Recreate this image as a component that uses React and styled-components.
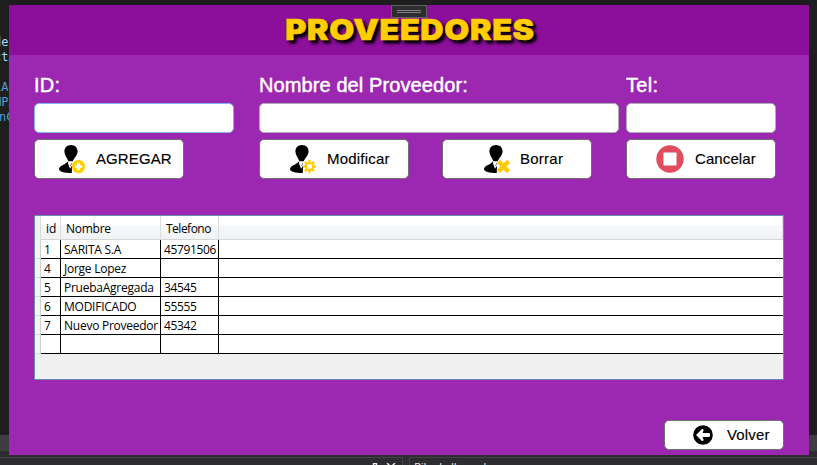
import React from "react";
import styled, { createGlobalStyle } from "styled-components";

const GlobalStyle = createGlobalStyle`
  * { box-sizing: border-box; }
  body { margin: 0; background: #1e1e1e; overflow: hidden; }
`;

const Desktop = styled.div`
  display: grid;
  width: 817px;
  height: 465px;
  overflow: hidden;
  background: #1e1e1e;
`;

const Editor = styled.div`
  grid-area: 1 / 1;
  display: grid;
  grid-template-rows: 435px 16px 14px;
  min-width: 0;
  height: 465px;
  overflow: hidden;
`;

const CodeArea = styled.div`
  display: flex;
  flex-direction: column;
  width: 9px;
  overflow: hidden;
  padding-top: 12px;
  font: 12px/15px "DejaVu Sans Mono", monospace;
`;

const CodeLine = styled.div`
  height: ${(p) => p.$h}px;
  margin-left: ${(p) => p.$shift}px;
  color: ${(p) => p.$color};
  white-space: pre;
`;

const ScrollStrip = styled.div`
  background: #3e3e42;
`;

const DockRow = styled.div`
  display: flex;
  gap: 6px;
  padding-top: 6px;
  background: #2d2d30;
`;

const DockPanel = styled.div`
  width: ${(p) => p.$w}px;
  flex: none;
  height: 20px;
  padding: 2px 0 0 ${(p) => p.$pad}px;
  border: 1px solid #434346;
  border-left-width: ${(p) => (p.$open ? 0 : 1)}px;
  color: #e8e8e8;
  font: 11.5px/14px "Open Sans", sans-serif;
  letter-spacing: -0.2px;
  white-space: pre;

  svg { display: block; margin-top: 3px; }
`;

const AppWindow = styled.main`
  grid-area: 1 / 1;
  z-index: 1;
  width: 800px;
  height: 450px;
  margin: 5px 0 0 9px;
  background: #9c27b0;
  font-family: "Liberation Sans", Arial, sans-serif;
`;

const Header = styled.header`
  position: relative;
  display: flex;
  justify-content: center;
  height: 50px;
  background: #8b0f9b;
`;

const Title = styled.h1`
  margin: 7px 0 0 2px;
  color: #ffcd00;
  font: 900 28.5px/36px Inter, sans-serif;
  letter-spacing: 0.5px;
  transform: scaleX(1.135);
  -webkit-text-stroke: 0.5px #ffcd00;
  text-shadow: 2.6px 3px 3px #000, 2.6px 3px 3px rgba(0, 0, 0, 0.7);
  white-space: nowrap;
`;

const DebugHandle = styled.div`
  position: absolute;
  top: 0;
  left: 382px;
  display: flex;
  flex-direction: column;
  gap: 1px;
  width: 36px;
  height: 13px;
  padding: 4px 5px;
  border: 1px solid #626264;
  background: #2d2d30;
`;

const HandleBar = styled.span`
  height: 1px;
  background: #808082;
`;

const Body = styled.div`
  display: flex;
  flex-direction: column;
  height: 400px;
  padding: 19px 25px 5px;
`;

const Fields = styled.div`
  display: grid;
  grid-template-columns: 225px 367px 150px;
  margin-bottom: 6px;
`;

const Field = styled.label`
  display: flex;
  flex-direction: column;
  width: ${(p) => p.$w}px;
`;

const Caption = styled.span`
  height: 29px;
  color: #fff;
  font-size: 20px;
  line-height: 23px;
  letter-spacing: ${(p) => p.$track}px;
  -webkit-text-stroke: 0.45px #fff;
  white-space: nowrap;
`;

const Input = styled.input`
  width: 100%;
  height: 30px;
  padding: 0 6px;
  border: 1px solid ${(p) => (p.$active ? "#7eb4ea" : "#abadb3")};
  border-radius: 5px;
  outline: none;
  background: #fff;
`;

const Actions = styled.div`
  display: grid;
  grid-template-columns: 225px 183px 184px 150px;
  margin-bottom: 36px;
`;

const Button = styled.button`
  display: flex;
  align-items: center;
  width: ${(p) => p.$w || 150}px;
  height: ${(p) => p.$h || 40}px;
  padding: 0 0 0 ${(p) => p.$pad}px;
  border: 1px solid #707070;
  border-radius: 5px;
  background: #fff;
  color: #000;
  font: 15px/20px "Liberation Sans", Arial, sans-serif;

  svg { flex: none; }
`;

const ButtonText = styled.span`
  margin-left: ${(p) => p.$gap}px;
  letter-spacing: ${(p) => p.$track}px;
  -webkit-text-stroke: 0.15px #000;
`;

const Grid = styled.div`
  width: 750px;
  height: 165px;
  flex: none;
  border: 1px solid #688caf;
  background: #f0f0f0;
  font: 12px/18px "Open Sans", "Noto Sans", sans-serif;
  color: #000;
`;

const GridHead = styled.div`
  display: grid;
  grid-template-columns: 6px 20px 100px 58px 1fr;
  height: 24px;
`;

const HeadCell = styled.div`
  padding: 4px 0 0 5px;
  border-right: 1px solid #dcdcde;
  border-bottom: 1px solid #d5d5d5;
  background: linear-gradient(#fff 0 40%, #f7f8fa 41%, #f1f2f4);
  letter-spacing: ${(p) => p.$track || 0}px;
  white-space: nowrap;

  &:first-child { background: #f0f0f0; border-bottom-color: #f0f0f0; }
`;

const GridRow = styled.div`
  display: grid;
  grid-template-columns: 6px 20px 100px 58px 1fr;
  grid-template-rows: 19px;
  height: 19px;
`;

const RowHead = styled.div`
  border-right: 1px solid #d0d0d0;
  border-bottom: 1px solid #dcdcdc;
  background: linear-gradient(90deg, #fafafa, #f0f0f0);
`;

const Cell = styled.div`
  height: 19px;
  padding-left: 3px;
  border-right: 1px solid #000;
  border-bottom: 1px solid #000;
  background: #fff;
  letter-spacing: ${(p) => p.$track || 0}px;
  line-height: 19px;
  white-space: nowrap;

  &:last-child { border-right: 0; }
`;

const Footer = styled.footer`
  display: flex;
  justify-content: flex-end;
  margin-top: auto;
`;

const PLUS = (
  <>
    <circle cx="19.5" cy="21.5" r="6.6" fill="#ffcd00" />
    <path d="M19.5 17.8v7.4M15.8 21.5h7.4" stroke="#fff" strokeWidth="2.7" />
  </>
);

const GEAR = (
  <>
    <path
      d="M19.5 15v13M13 21.5h13M14.9 16.9l9.2 9.2M24.1 16.9l-9.2 9.2"
      stroke="#ffcd00"
      strokeWidth="2.3"
    />
    <circle cx="19.5" cy="21.5" r="3.5" fill="#fff" stroke="#ffcd00" strokeWidth="2" />
  </>
);

const CROSS = (
  <path d="M14.4 16.4l10.2 10.2M24.6 16.4l-10.2 10.2" stroke="#ffc90a" strokeWidth="4.4" />
);

function PersonIcon({ badge }) {
  return (
    <svg width="28" height="29" viewBox="0 0 28 29">
      <path d="M12 0C8 0 5.4 2.8 5.4 6.5c0 3.7 2.7 6.4 4 9.7h4.3c1.5-3.4 4.9-6 4.9-9.7C18.6 2.8 16 0 12 0z" />
      <path d="M8.4 16.2C7.8 19.5 0 20.2 0 24.2c0 2.3 5.2 3.8 12.8 3.8l.2-10.6-2 3.8z" />
      <path d="M9.5 18l1.7 4.5L14 18" fill="none" stroke="#fff" strokeWidth="1.2" />
      {badge}
    </svg>
  );
}

function StopIcon() {
  return (
    <svg width="28" height="28" viewBox="0 0 28 28">
      <circle cx="14" cy="14" r="13.7" fill="#e24c5f" />
      <rect x="7.5" y="7.5" width="13" height="13" rx="0.7" fill="#fff" />
    </svg>
  );
}

function BackIcon() {
  return (
    <svg width="20" height="20" viewBox="0 0 20 20">
      <circle cx="10" cy="10" r="9.8" />
      <path
        d="M3 10l6-6q1.5-.4 1.6 1.2L9.6 8H16q1.2 0 1.2 2T16 12H9.6l1 2.8q-.1 1.6-1.6 1.2z"
        fill="#fff"
      />
    </svg>
  );
}

function PinAndClose() {
  return (
    <svg width="26" height="10" viewBox="0 0 26 10" fill="none" stroke="#f1f1f1">
      <path d="M1.5 6V.5h3V6M0 6.5h6M3 7v3M15 0l8 8M23 0l-8 8" strokeWidth="1.4" />
    </svg>
  );
}

const codeLines = [
  ["·  -", 23, "#9cdcfe", -13],
  ["de:", 15, "#9cdcfe", -6],
  ["ctA", 30, "#9cdcfe", -6],
  ["LA:", 15, "#569cd6", -6],
  ["MPA", 15, "#569cd6", -6],
  ["nC", 15, "#569cd6", -1],
];

const rows = [
  ["1", "SARITA S.A", "45791506"],
  ["4", "Jorge Lopez", ""],
  ["5", "PruebaAgregada", "34545"],
  ["6", "MODIFICADO", "55555"],
  ["7", "Nuevo Proveedor", "45342"],
  ["", "", ""],
];

export default function App() {
  return (
    <>
      <GlobalStyle />
      <Desktop>
        <Editor>
          <CodeArea>
            {codeLines.map(([text, h, color, shift]) => (
              <CodeLine key={text} $h={h} $color={color} $shift={shift}>{text}</CodeLine>
            ))}
          </CodeArea>
          <ScrollStrip />
          <DockRow>
            <DockPanel $w={403} $pad={372} $open><PinAndClose /></DockPanel>
            <DockPanel $w={420} $pad={4}>Pila de llamadas</DockPanel>
          </DockRow>
        </Editor>
        <AppWindow>
          <Header>
            <Title>PROVEEDORES</Title>
            <DebugHandle>
              <HandleBar />
              <HandleBar />
            </DebugHandle>
          </Header>
          <Body>
            <Fields>
              <Field $w={200}><Caption $track={0.2}>ID:</Caption><Input $active /></Field>
              <Field $w={360}><Caption $track={0.1}>Nombre del Proveedor:</Caption><Input /></Field>
              <Field $w={150}><Caption $track={0.3}>Tel:</Caption><Input /></Field>
            </Fields>
            <Actions>
              <Button $pad={24}><PersonIcon badge={PLUS} /><ButtonText $gap={9} $track={0.1}>AGREGAR</ButtonText></Button>
              <Button $pad={30}><PersonIcon badge={GEAR} /><ButtonText $gap={9} $track={0.2}>Modificar</ButtonText></Button>
              <Button $pad={41}><PersonIcon badge={CROSS} /><ButtonText $gap={8} $track={0.25}>Borrar</ButtonText></Button>
              <Button $pad={29}><StopIcon /><ButtonText $gap={11} $track={0.1}>Cancelar</ButtonText></Button>
            </Actions>
            <Grid>
              <GridHead>
                <HeadCell />
                <HeadCell>id</HeadCell>
                <HeadCell $track={-0.25}>Nombre</HeadCell>
                <HeadCell $track={-0.5}>Telefono</HeadCell>
                <HeadCell />
              </GridHead>
              {rows.map(([id, name, phone], i) => (
                <GridRow key={i}>
                  <RowHead />
                  <Cell>{id}</Cell>
                  <Cell $track={-0.25}>{name}</Cell>
                  <Cell $track={-0.35}>{phone}</Cell>
                  <Cell />
                </GridRow>
              ))}
            </Grid>
            <Footer>
              <Button $w={120} $h={30} $pad={28}><BackIcon /><ButtonText $gap={14} $track={0.15}>Volver</ButtonText></Button>
            </Footer>
          </Body>
        </AppWindow>
      </Desktop>
    </>
  );
}
